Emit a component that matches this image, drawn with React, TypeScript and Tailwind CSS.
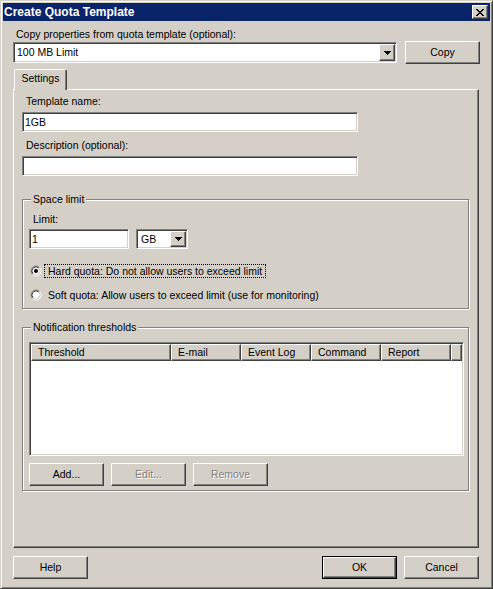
import React from "react";

const raised =
  "border border-t-white border-l-white border-r-[#404040] border-b-[#404040] shadow-[inset_-1px_-1px_0_#808080] bg-[#d4d0c8]";
const sunken =
  "border border-t-[#808080] border-l-[#808080] border-r-white border-b-white shadow-[inset_1px_1px_0_#404040,inset_-1px_-1px_0_#d4d0c8]";

function Btn({ label, disabled, def, className = "" }: { label: string; disabled?: boolean; def?: boolean; className?: string }) {
  const text = disabled ? "text-[#808080] [text-shadow:1px_1px_0_#fff]" : "text-black";
  if (def) {
    return (
      <div className={`w-[75px] h-[23px] border border-black flex ${className}`}>
        <div className={`flex-1 flex items-center justify-center ${raised} ${text}`}>{label}</div>
      </div>
    );
  }
  return (
    <div className={`w-[75px] h-[23px] flex items-center justify-center ${raised} ${text} ${className}`}>{label}</div>
  );
}

function Tri() {
  return (
    <svg width="7" height="4" viewBox="0 0 7 4" shapeRendering="crispEdges">
      <path d="M0 0h7v1H0z M1 1h5v1H1z M2 2h3v1H2z M3 3h1v1H3z" fill="#000" />
    </svg>
  );
}

function Combo({ value, w, h, pl }: { value: string; w: string; h: string; pl: string }) {
  return (
    <div className={`${w} ${h} bg-white flex p-[1px] ${sunken}`}>
      <div className={`flex-1 flex items-center ${pl}`}>{value}</div>
      <div className={`w-[16px] flex items-center justify-center ${raised}`}>
        <Tri />
      </div>
    </div>
  );
}

function Edit({ value, w, className = "" }: { value?: string; w: string; className?: string }) {
  return (
    <div className={`${w} h-[20px] bg-white flex items-center p-[1px] pl-[2px] ${sunken} ${className}`}>{value}</div>
  );
}

function Radio({ checked }: { checked?: boolean }) {
  return (
    <svg width="12" height="12" viewBox="0 0 12 12">
      <circle cx="6" cy="6" r="4" fill="#fff" />
      <path d="M2.46 9.54 A5 5 0 0 1 9.54 2.46" fill="none" stroke="#808080" strokeWidth="1" />
      <path d="M9.54 2.46 A5 5 0 0 1 2.46 9.54" fill="none" stroke="#ffffff" strokeWidth="1" />
      <path d="M3.17 8.83 A4 4 0 0 1 8.83 3.17" fill="none" stroke="#404040" strokeWidth="1" />
      <path d="M8.83 3.17 A4 4 0 0 1 3.17 8.83" fill="none" stroke="#d4d0c8" strokeWidth="1" />
      {checked && <circle cx="6" cy="6" r="2" fill="#000" />}
    </svg>
  );
}

function CloseBtn() {
  return (
    <div className={`w-[16px] h-[14px] flex items-center justify-center ${raised}`}>
      <svg width="8" height="7" viewBox="0 0 8 7" shapeRendering="crispEdges">
        <path
          d="M0 0h2v1H0z M6 0h2v1H6z M1 1h2v1H1z M5 1h2v1H5z M2 2h4v1H2z M3 3h2v1H3z M2 4h4v1H2z M1 5h2v1H1z M5 5h2v1H5z M0 6h2v1H0z M6 6h2v1H6z"
          fill="#000"
        />
      </svg>
    </div>
  );
}

function HeaderCell({ label, w }: { label?: string; w: string }) {
  return <div className={`${w} h-full flex items-center pl-[6px] ${raised}`}>{label}</div>;
}

export default function App() {
  return (
    <div className="w-[493px] h-[589px] bg-[#d4d0c8] border border-t-[#d4d0c8] border-l-[#d4d0c8] border-r-[#404040] border-b-[#404040] shadow-[inset_1px_1px_0_#fff,inset_-1px_-1px_0_#808080] p-[2px] flex flex-col font-['Liberation_Sans',Arial,sans-serif] text-[10.5px] leading-[13px] text-black select-none">
      <div className="h-[18px] bg-[#0a246a] flex items-center justify-between pl-[1px] pr-[2px]">
        <span className="text-white font-bold text-[12px] leading-[14px]">Create Quota Template</span>
        <CloseBtn />
      </div>

      <div className="flex flex-col px-[10px]">
        <div className="mt-[7px] pl-[3px] h-[13px]">Copy properties from quota template (optional):</div>
        <div className="h-[23px] flex items-center gap-[8px]">
          <Combo value="100 MB Limit" w="w-[384px]" h="h-[21px]" pl="pl-[2px]" />
          <Btn label="Copy" />
        </div>

        <div className="mt-[5px] flex pl-[1px]">
          <div className="relative z-10 -mb-[1px] w-[53px] h-[21px] bg-[#d4d0c8] border-t border-l border-r border-t-white border-l-white border-r-[#404040] rounded-t-[2px] shadow-[inset_-1px_0_0_#808080] flex justify-center pt-[2px]">
            Settings
          </div>
        </div>

        <div className="w-[466px] h-[459px] flex flex-col border border-t-white border-l-white border-r-[#404040] border-b-[#404040] shadow-[inset_-1px_-1px_0_#808080] pt-[5px] pl-[8px]">
          <div className="pl-[4px] h-[13px]">Template name:</div>
          <Edit value="1GB" w="w-[336px]" className="mt-[4px]" />
          <div className="pl-[4px] h-[13px] mt-[7px]">Description (optional):</div>
          <Edit w="w-[336px]" className="mt-[4px]" />

          <fieldset className="mt-[17px] w-[447px] min-w-0 border border-[#808080] shadow-[inset_1px_1px_0_#fff,1px_1px_0_#fff] pb-[6px]">
            <legend className="ml-[8px] px-[2px] bg-[#d4d0c8] leading-[13px]">Space limit</legend>
            <div className="flex flex-col">
              <div className="mt-[7px] pl-[10px] h-[13px]">Limit:</div>
              <div className="mt-[3px] pl-[6px] flex gap-[7px]">
                <Edit value="1" w="w-[100px]" />
                <Combo value="GB" w="w-[52px]" h="h-[20px]" pl="pl-[3px]" />
              </div>
              <div className="mt-[15px] h-[14px] pl-[7px] flex items-center">
                <Radio checked />
                <span className="ml-[2px] h-[14px] border border-dotted border-black px-[3px] leading-[12px]">
                  Hard quota: Do not allow users to exceed limit
                </span>
              </div>
              <div className="mt-[10px] h-[14px] pl-[7px] flex items-center">
                <Radio />
                <span className="ml-[2px] h-[14px] border border-transparent px-[3px] leading-[12px]">
                  Soft quota: Allow users to exceed limit (use for monitoring)
                </span>
              </div>
            </div>
          </fieldset>

          <fieldset className="mt-[12px] w-[447px] min-w-0 border border-[#808080] shadow-[inset_1px_1px_0_#fff,1px_1px_0_#fff] pb-[4px]">
            <legend className="ml-[8px] px-[2px] bg-[#d4d0c8] leading-[13px]">Notification thresholds</legend>
            <div className="flex flex-col">
              <div className={`mt-[8px] ml-[6px] w-[435px] h-[114px] bg-white p-[1px] flex flex-col ${sunken}`}>
                <div className="h-[17px] flex">
                  <HeaderCell label="Threshold" w="w-[140px]" />
                  <HeaderCell label="E-mail" w="w-[70px]" />
                  <HeaderCell label="Event Log" w="w-[70px]" />
                  <HeaderCell label="Command" w="w-[70px]" />
                  <HeaderCell label="Report" w="w-[70px]" />
                  <HeaderCell w="flex-1" />
                </div>
              </div>
              <div className="mt-[7px] ml-[6px] flex gap-[7px]">
                <Btn label="Add..." />
                <Btn label="Edit..." disabled />
                <Btn label="Remove" disabled />
              </div>
            </div>
          </fieldset>
        </div>

        <div className="mt-[8px] w-[466px] flex">
          <Btn label="Help" />
          <div className="flex-1" />
          <Btn label="OK" def />
          <Btn label="Cancel" className="ml-[7px]" />
        </div>
      </div>
    </div>
  );
}
